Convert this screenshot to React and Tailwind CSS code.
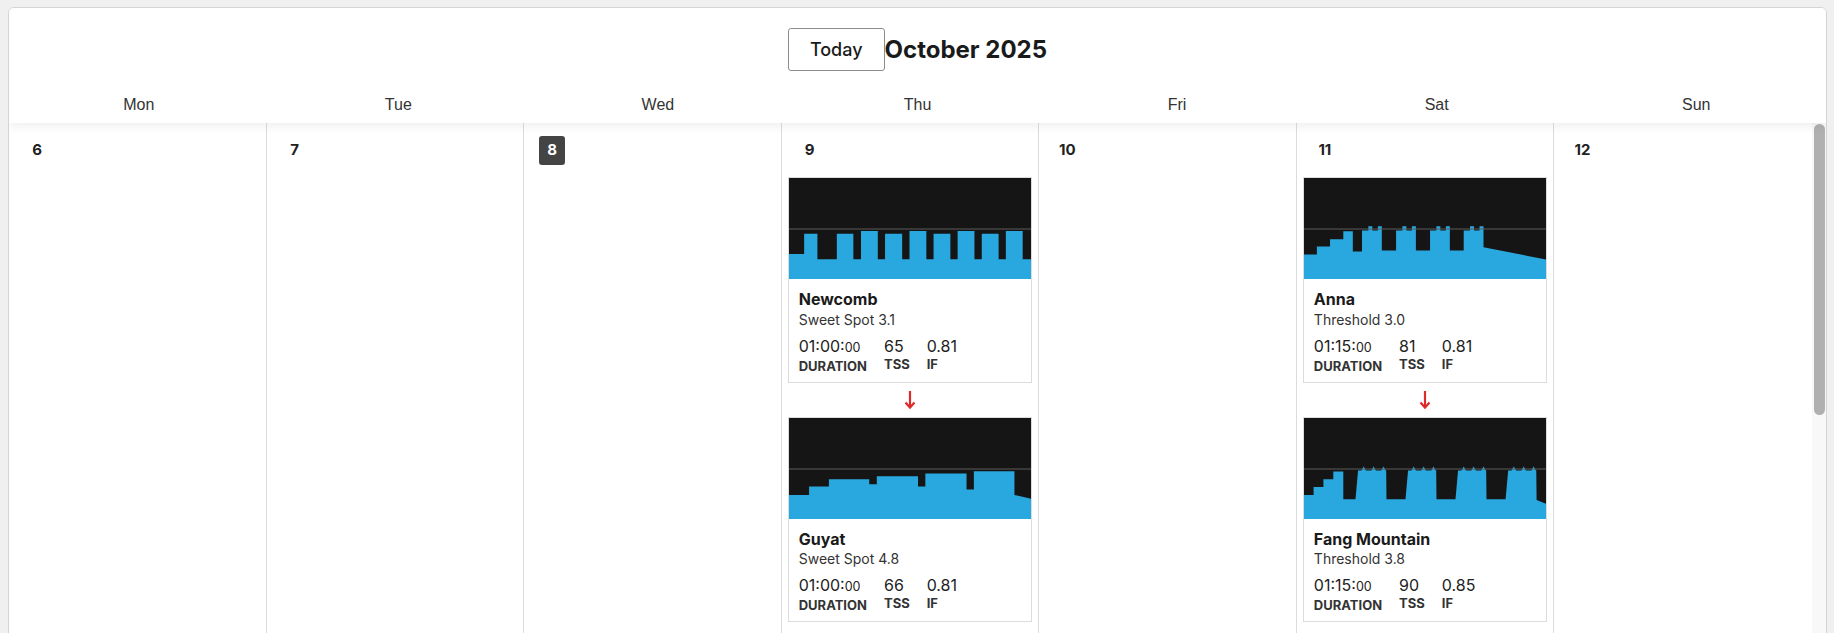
import React from 'react';

const seg = (list) => list.flatMap(([x0, x1, y0, y1 = y0]) => [[x0, y0], [x1, y1]]);

const annaBar = (x) => [
  [x, x + 6.4, 52.6],
  [x + 6.4, x + 10.4, 48.3],
  [x + 10.4, x + 16, 52.6],
  [x + 16, x + 20, 48.3],
];

const fangBar = (x) => [
  [x, 81.3], [x + 2.6, 52.6], [x + 6, 52.6], [x + 8.3, 48.6], [x + 10.6, 52.6],
  [x + 16, 52.6], [x + 18.3, 48.6], [x + 20.6, 52.6], [x + 26, 52.6], [x + 28.3, 48.6],
  [x + 30.6, 52.6], [x + 31, 52.6], [x + 31.3, 81.3],
];

const charts = {
  newcomb: seg([
    [0, 15.3, 76], [15.3, 28.7, 55.7], [28.7, 48.3, 81.3], [48.3, 65, 55.7], [65, 72.7, 81.3],
    [72.7, 89.7, 53], [89.7, 97, 81.3], [97, 114.3, 55.7], [114.3, 121.7, 81.3], [121.7, 138.7, 53],
    [138.7, 146, 81.3], [146, 163, 55.7], [163, 170.3, 81.3], [170.3, 187.3, 53], [187.3, 194.7, 81.3],
    [194.7, 211.7, 55.7], [211.7, 219, 81.3], [219, 236, 53], [236, 245, 81.3],
  ]),
  guyat: seg([
    [0, 20.3, 77], [20.3, 40.3, 68.6], [40.3, 81, 61.3], [81, 88.7, 66.3], [88.7, 130.3, 58.3],
    [130.3, 137.7, 68.6], [137.7, 179.3, 55.6], [179.3, 186.7, 71.6], [186.7, 227.7, 53.3],
    [227.7, 245, 77, 81],
  ]),
  anna: seg([
    [0, 13, 76.6], [13, 26.3, 68.6], [26.3, 39.7, 61.3], [39.7, 49.3, 53.3], [49.3, 58.6, 73.6],
    ...annaBar(58.6), [78.6, 93, 72.6],
    ...annaBar(93), [113, 127.3, 72.6],
    ...annaBar(127.3), [147.3, 161.3, 72.6],
    ...annaBar(161.3), [181.3, 245, 69.3, 81.6],
  ]),
  fang: [
    ...seg([[0, 9.7, 77], [9.7, 19.6, 69], [19.6, 29.6, 61.3], [29.6, 39.7, 53.6], [39.7, 52, 81.3]]),
    ...fangBar(52), ...fangBar(102.5), ...fangBar(153), ...fangBar(203.6),
    [234.9, 82], [245, 86],
  ],
};

const days = [
  { name: 'Mon', num: 6 },
  { name: 'Tue', num: 7 },
  { name: 'Wed', num: 8, today: true },
  {
    name: 'Thu', num: 9, workouts: [
      { chart: 'newcomb', title: 'Newcomb', sub: 'Sweet Spot 3.1', dur: '01:00:', sec: '00', tss: 65, ifv: '0.81' },
      { chart: 'guyat', title: 'Guyat', sub: 'Sweet Spot 4.8', dur: '01:00:', sec: '00', tss: 66, ifv: '0.81' },
    ],
  },
  { name: 'Fri', num: 10 },
  {
    name: 'Sat', num: 11, workouts: [
      { chart: 'anna', title: 'Anna', sub: 'Threshold 3.0', dur: '01:15:', sec: '00', tss: 81, ifv: '0.81' },
      { chart: 'fang', title: 'Fang Mountain', sub: 'Threshold 3.8', dur: '01:15:', sec: '00', tss: 90, ifv: '0.85' },
    ],
  },
  { name: 'Sun', num: 12 },
];

const Chart = ({ pts }) => {
  const poly = [...pts, [245, 101], [0, 101]].map(([x, y]) => `${x},${y}`).join(' ');
  return (
    <svg viewBox="0 0 245 101" preserveAspectRatio="none" className="block w-full h-[101px] bg-[#151515]">
      <polygon points={poly} fill="#29a8df" />
      <line x1="0" y1="51" x2="245" y2="51" stroke="#5c5c5c" strokeWidth="1.2" vectorEffect="non-scaling-stroke" />
    </svg>
  );
};

const WorkoutCard = ({ w }) => (
  <div className="border border-[#dcdcdc] bg-white">
    <Chart pts={charts[w.chart]} />
    <div className="px-[10px] pt-[10px] pb-2">
      <div className="text-[16px] leading-5 font-bold text-[#1a1a1a]">{w.title}</div>
      <div className="mt-[1.5px] text-[14px] leading-[18px] text-[#333]">{w.sub}</div>
      <div className="mt-[7px] flex gap-[17px]">
        <div>
          <div className="text-[16px] leading-5 text-[#222]">{w.dur}<span className="text-[12.5px]">{w.sec}</span></div>
          <div className="text-[13px] leading-4 font-bold text-[#333]">DURATION</div>
        </div>
        <div>
          <div className="text-[16px] leading-5 text-[#222]">{w.tss}</div>
          <div className="text-[13px] leading-4 font-bold text-[#333]">TSS</div>
        </div>
        <div>
          <div className="text-[16px] leading-5 text-[#222]">{w.ifv}</div>
          <div className="text-[13px] leading-4 font-bold text-[#333]">IF</div>
        </div>
      </div>
    </div>
  </div>
);

const Arrow = () => (
  <div className="flex h-[34px] items-center justify-center">
    <svg viewBox="0 0 12 20" className="w-[12px] h-[20px]" fill="none" stroke="#dd2a2a" strokeWidth="2.2">
      <line x1="6" y1="1" x2="6" y2="17" />
      <polyline points="1.5,12.5 6,17.5 10.5,12.5" />
    </svg>
  </div>
);

export default function App() {
  return (
    <div className="h-screen overflow-hidden bg-[#f0f0f0] pl-2 pr-[7px] pt-[7px] font-['Inter',sans-serif]">
      <div className="h-[720px] flex flex-col bg-white border border-[#d4d4d4] rounded-md overflow-hidden">
        <div className="relative z-10 bg-white shadow-[0_3px_10px_rgba(0,0,0,0.07)]">
          <div className="flex items-center justify-center pt-5">
            <button type="button" className="h-[43px] px-[21px] border border-[#8c8c8c] rounded-[3px] bg-white text-[18px] font-medium text-[#1a1a1a]">
              Today
            </button>
            <h1 className="text-[24px] leading-8 font-bold text-[#1a1a1a]">October 2025</h1>
          </div>
          <div className="grid grid-cols-7 pt-[25px] pb-[9px] text-center text-[16px] leading-[18px] text-[#333] font-['Liberation_Sans',Arial,sans-serif]">
            {days.map(d => <div key={d.name}>{d.name}</div>)}
          </div>
        </div>
        <div className="flex flex-1 min-h-0 overflow-hidden">
          <div className="grid flex-1 grid-cols-7">
            {days.map((d, i) => (
              <div key={d.name} className={i < 6 ? 'border-r border-[#dcdcdc]' : ''}>
                <div className={`ml-[15px] mt-[13px] flex h-[29px] w-[26px] items-center justify-center rounded-[3px] text-[15px] font-bold ${d.today ? 'bg-[#444] text-white' : 'text-[#222]'}`}>
                  {d.num}
                </div>
                {d.workouts && (
                  <div className="mx-[6px] mt-3">
                    <WorkoutCard w={d.workouts[0]} />
                    <Arrow />
                    <WorkoutCard w={d.workouts[1]} />
                  </div>
                )}
              </div>
            ))}
          </div>
          <div className="w-[14px] shrink-0 bg-[#f8f8f8] pl-[2px] pt-px">
            <div className="h-[291px] w-[11px] rounded-full bg-[#b0b0b0]" />
          </div>
        </div>
      </div>
    </div>
  );
}
